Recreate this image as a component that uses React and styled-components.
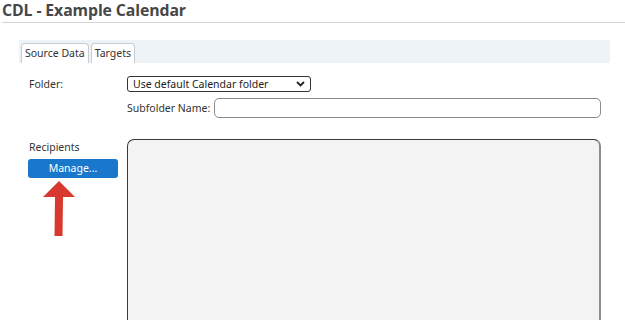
import React from 'react'
import styled, { createGlobalStyle } from 'styled-components'

const Global = createGlobalStyle`
  html, body {
    margin: 0;
    padding: 0;
    background: #ffffff;
  }
  body {
    font-family: "Noto Sans", "Open Sans", sans-serif;
    color: #222;
  }
`

function App() {
  return (
    <Page>
      <Global />
      <Header>
        <Title>CDL - Example Calendar</Title>
      </Header>

      <Content>
        <TabStrip>
          <Tab>Source Data</Tab>
          <Tab>Targets</Tab>
        </TabStrip>

        <Form>
          <Label>Folder:</Label>
          <Controls>
            <Select>
              <span>Use default Calendar folder</span>
              <svg width="9" height="6" viewBox="0 0 9 6">
                <path d="M1 1 L4.5 4.5 L8 1" fill="none" stroke="#222" strokeWidth="1.8" />
              </svg>
            </Select>
            <SubRow>
              <SubLabel>Subfolder Name:</SubLabel>
              <TextInput />
            </SubRow>
          </Controls>
        </Form>

        <Recipients>
          <Side>
            <Label>Recipients</Label>
            <ManageButton>Manage...</ManageButton>
            <Arrow width="34" height="56" viewBox="0 0 34 56">
              <polygon points="17,0 33,16 21,16 20.5,55 12.5,55 13,16 1,16" fill="#d8382e" />
            </Arrow>
          </Side>
          <ListBox />
        </Recipients>
      </Content>
    </Page>
  )
}

const Page = styled.div`
  width: 625px;
  height: 334px;
  overflow: hidden;
  background: #fff;
`

const Header = styled.div`
  margin-left: 2px;
  height: 22px;
  border-bottom: 1px solid #d6d6d6;
`

const Title = styled.h1`
  margin: 0;
  font-family: "Open Sans", sans-serif;
  font-weight: 700;
  font-size: 15.8px;
  line-height: 20px;
  color: #474747;
  letter-spacing: -0.1px;
`

const Content = styled.div`
  padding: 17px 15px 0 19px;
`

const TabStrip = styled.div`
  display: flex;
  align-items: flex-end;
  gap: 2px;
  height: 23px;
  padding-left: 2px;
  background: #eef3f8;
`

const Tab = styled.div`
  height: 19px;
  padding: 0 3px;
  border: 1px solid #c9cdd2;
  border-bottom: none;
  border-radius: 4px 4px 0 0;
  background: #fff;
  font-size: 10.5px;
  line-height: 19px;
  color: #333;
`

const Form = styled.div`
  display: flex;
  padding: 13px 9px 0 10px;
`

const Label = styled.div`
  width: 98px;
  flex-shrink: 0;
  font-size: 10.5px;
  line-height: 16px;
  color: #333;
`

const Controls = styled.div`
  display: flex;
  flex-direction: column;
  gap: 6px;
  flex: 1;
`

const Select = styled.div`
  display: flex;
  align-items: center;
  justify-content: space-between;
  width: 184px;
  height: 16px;
  padding: 0 5px;
  box-sizing: border-box;
  border: 1px solid #333;
  border-radius: 3px;
  font-size: 10.5px;
  line-height: 14px;
  color: #222;
`

const SubRow = styled.div`
  display: flex;
  align-items: center;
  gap: 4px;
`

const SubLabel = styled.span`
  font-size: 10.5px;
  color: #333;
`

const TextInput = styled.div`
  flex: 1;
  height: 20px;
  box-sizing: border-box;
  border: 1px solid #8a8a8a;
  border-radius: 5px;
  background: #fff;
`

const Recipients = styled.div`
  display: flex;
  padding: 21px 9px 0 10px;
`

const Side = styled.div`
  width: 98px;
  flex-shrink: 0;
  display: flex;
  flex-direction: column;
`

const ManageButton = styled.div`
  width: 90px;
  height: 19px;
  margin-top: 4px;
  margin-left: -1px;
  border-radius: 3px;
  background: #1a78cc;
  color: #fff;
  font-size: 10.5px;
  line-height: 19px;
  text-align: center;
`

const Arrow = styled.svg`
  margin: 3px 0 0 13px;
  display: block;
`

const ListBox = styled.div`
  flex: 1;
  height: 181px;
  box-sizing: border-box;
  border: 1px solid #3a3a3a;
  border-right: 2px solid #8c8c8c;
  border-bottom: none;
  border-radius: 7px 7px 0 0;
  background: #f3f3f3;
`

export default App
